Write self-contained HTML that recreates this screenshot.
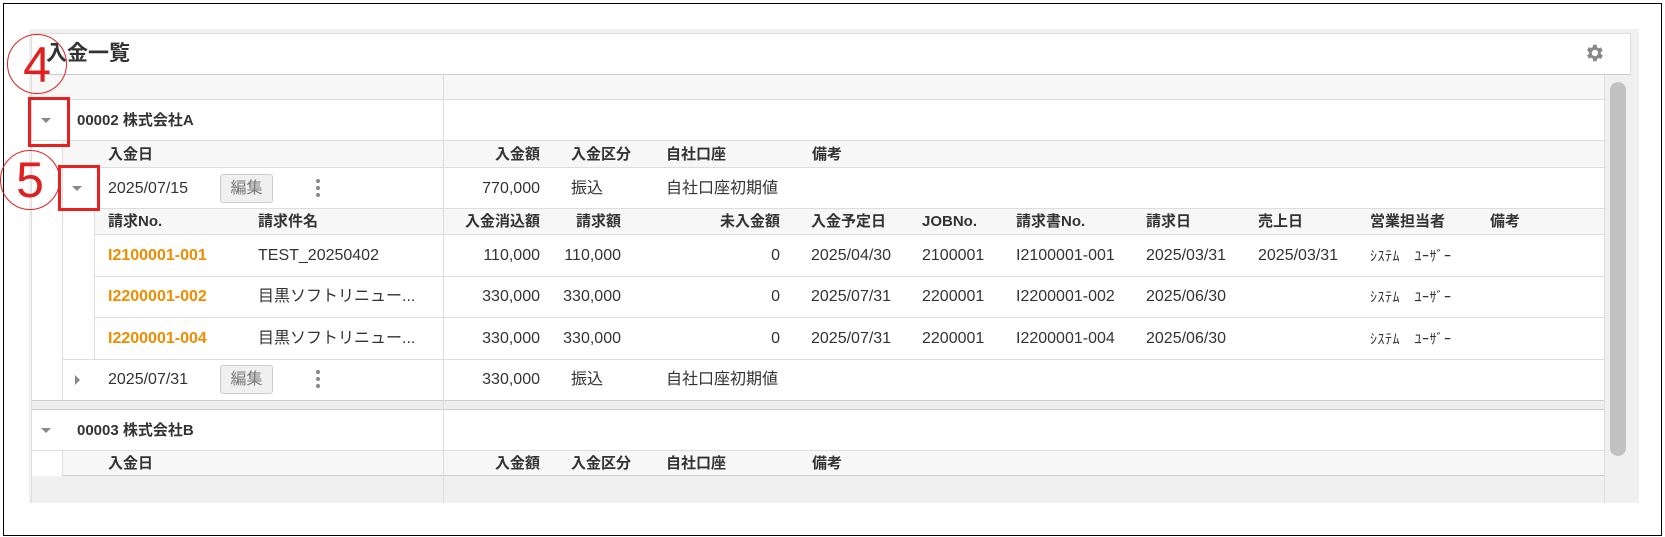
<!DOCTYPE html>
<html><head><meta charset="utf-8"><style>
*{margin:0;padding:0;box-sizing:border-box}
body{width:1665px;height:537px;background:#fff;position:relative;overflow:hidden;font-family:"Liberation Sans","Noto Sans CJK JP",sans-serif;font-size:16px;color:#333}
.a{position:absolute;white-space:nowrap}
.t{position:absolute;white-space:nowrap;line-height:20px}
.b{font-weight:bold;font-size:15px}
.o{color:#f08c00;font-weight:bold}
.rt{text-align:right}
.k{font-size:14px;letter-spacing:0.5px}
</style></head><body>
<div class="a" style="left:3px;top:3px;width:1659px;height:533px;border:1px solid #000"></div>
<div class="a" style="left:29px;top:29px;width:1610px;height:474px;background:#f0f0f0"></div>
<div class="a" style="left:31px;top:33px;width:1600px;height:470px;background:#fff;border:1px solid #ddd;border-bottom:none"></div>
<div class="t" style="left:46px;top:40px;font-size:21px;line-height:28px;font-weight:bold">入金一覧</div>
<svg class="a" style="left:1583px;top:42px" width="22" height="22" viewBox="0 0 24 24"><path fill="#888" d="M19.4 13a7.5 7.5 0 0 0 0-2l2.1-1.6-2-3.5-2.5 1a7.6 7.6 0 0 0-1.7-1L15 3h-4l-.4 2.6a7.6 7.6 0 0 0-1.7 1l-2.5-1-2 3.5L6.6 11a7.5 7.5 0 0 0 0 2l-2.1 1.6 2 3.5 2.5-1a7.6 7.6 0 0 0 1.7 1L11 21h4l.4-2.6a7.6 7.6 0 0 0 1.7-1l2.5 1 2-3.5zM13 15.5a3.5 3.5 0 1 1 0-7 3.5 3.5 0 0 1 0 7z"/></svg>
<div class="a" style="left:32px;top:74px;width:1572px;height:26px;background:#f7f7f7;border-top:1px solid #ccc;border-bottom:1px solid #ddd"></div>
<div class="a" style="left:32px;top:140px;width:1572px;height:1px;background:#ddd"></div>
<div class="a" style="left:62px;top:141px;width:1542px;height:27px;background:#f7f7f7;border-bottom:1px solid #ddd;border-left:1px solid #ddd"></div>
<div class="a" style="left:62px;top:168px;width:1px;height:233px;background:#ddd"></div>
<div class="a" style="left:62px;top:208px;width:1542px;height:1px;background:#ddd"></div>
<div class="a" style="left:94px;top:209px;width:1510px;height:26px;background:#f7f7f7;border-bottom:1px solid #ddd;border-left:1px solid #ddd"></div>
<div class="a" style="left:94px;top:235px;width:1px;height:125px;background:#ddd"></div>
<div class="a" style="left:94px;top:276px;width:1510px;height:1px;background:#ddd"></div>
<div class="a" style="left:94px;top:317px;width:1510px;height:1px;background:#ddd"></div>
<div class="a" style="left:62px;top:359px;width:1542px;height:1px;background:#ddd"></div>
<div class="a" style="left:32px;top:400px;width:1572px;height:10px;background:#eee;border-top:1px solid #ccc;border-bottom:1px solid #ccc"></div>
<div class="a" style="left:32px;top:450px;width:1572px;height:1px;background:#ddd"></div>
<div class="a" style="left:62px;top:451px;width:1542px;height:25px;background:#f7f7f7;border-left:1px solid #ddd;border-bottom:1px solid #ccc"></div>
<div class="a" style="left:32px;top:476px;width:1572px;height:27px;background:#f0f0f0"></div>
<div class="a" style="left:443px;top:74px;width:1px;height:429px;background:#ddd"></div>
<div class="a" style="left:1604px;top:74px;width:27px;height:429px;background:#f0f0f0;border-left:1px solid #ddd;border-top:1px solid #ccc"></div>
<div class="a" style="left:1610px;top:82px;width:16px;height:374px;background:#c1c1c1;border-radius:8px"></div>
<div class="a" style="left:41px;top:118px;border:5px solid transparent;border-top:5px solid #888;border-bottom:none"></div>
<div class="a" style="left:72px;top:186px;border:5px solid transparent;border-top:5px solid #888;border-bottom:none"></div>
<div class="a" style="left:75px;top:375px;border:5px solid transparent;border-left:5px solid #888;border-right:none"></div>
<div class="a" style="left:41px;top:428px;border:5px solid transparent;border-top:5px solid #888;border-bottom:none"></div>
<div class="t b" style="left:77px;top:111px">00002 株式会社A</div>
<div class="t b" style="left:108px;top:145px">入金日</div>
<div class="t b rt" style="left:440px;width:100px;top:145px">入金額</div>
<div class="t b" style="left:571px;top:145px">入金区分</div>
<div class="t b" style="left:666px;top:145px">自社口座</div>
<div class="t b" style="left:812px;top:145px">備考</div>
<div class="t" style="left:108px;top:179px">2025/07/15</div>
<div class="a" style="left:220px;top:174px;width:53px;height:29px;background:#f0f0f0;border:1px solid #ccc;border-radius:3px;color:#777;text-align:center;line-height:27px">編集</div>
<div class="a" style="left:316px;top:179px;width:4px;height:4px;border-radius:2px;background:#888;box-shadow:0 7px #888,0 14px #888"></div>
<div class="t rt" style="left:440px;width:100px;top:179px">770,000</div>
<div class="t" style="left:571px;top:179px">振込</div>
<div class="t" style="left:666px;top:179px">自社口座初期値</div>
<div class="t b" style="left:108px;top:212px">請求No.</div>
<div class="t b" style="left:258px;top:212px">請求件名</div>
<div class="t b rt" style="left:440px;width:100px;top:212px">入金消込額</div>
<div class="t b rt" style="left:521px;width:100px;top:212px">請求額</div>
<div class="t b rt" style="left:680px;width:100px;top:212px">未入金額</div>
<div class="t b" style="left:811px;top:212px">入金予定日</div>
<div class="t b" style="left:922px;top:212px">JOBNo.</div>
<div class="t b" style="left:1016px;top:212px">請求書No.</div>
<div class="t b" style="left:1146px;top:212px">請求日</div>
<div class="t b" style="left:1258px;top:212px">売上日</div>
<div class="t b" style="left:1370px;top:212px">営業担当者</div>
<div class="t b" style="left:1490px;top:212px">備考</div>

<div class="t o" style="left:108px;top:246px">I2100001-001</div>
<div class="t" style="left:258px;top:246px">TEST_20250402</div>
<div class="t rt" style="left:440px;width:100px;top:246px">110,000</div>
<div class="t rt" style="left:521px;width:100px;top:246px">110,000</div>
<div class="t rt" style="left:680px;width:100px;top:246px">0</div>
<div class="t" style="left:811px;top:246px">2025/04/30</div>
<div class="t" style="left:922px;top:246px">2100001</div>
<div class="t" style="left:1016px;top:246px">I2100001-001</div>
<div class="t" style="left:1146px;top:246px">2025/03/31</div>
<div class="t" style="left:1258px;top:246px">2025/03/31</div>
<div class="t k" style="left:1370px;top:246px">ｼｽﾃﾑ　ﾕｰｻﾞｰ</div>

<div class="t o" style="left:108px;top:287px">I2200001-002</div>
<div class="t" style="left:258px;top:287px">目黒ソフトリニュー...</div>
<div class="t rt" style="left:440px;width:100px;top:287px">330,000</div>
<div class="t rt" style="left:521px;width:100px;top:287px">330,000</div>
<div class="t rt" style="left:680px;width:100px;top:287px">0</div>
<div class="t" style="left:811px;top:287px">2025/07/31</div>
<div class="t" style="left:922px;top:287px">2200001</div>
<div class="t" style="left:1016px;top:287px">I2200001-002</div>
<div class="t" style="left:1146px;top:287px">2025/06/30</div>
<div class="t k" style="left:1370px;top:287px">ｼｽﾃﾑ　ﾕｰｻﾞｰ</div>

<div class="t o" style="left:108px;top:329px">I2200001-004</div>
<div class="t" style="left:258px;top:329px">目黒ソフトリニュー...</div>
<div class="t rt" style="left:440px;width:100px;top:329px">330,000</div>
<div class="t rt" style="left:521px;width:100px;top:329px">330,000</div>
<div class="t rt" style="left:680px;width:100px;top:329px">0</div>
<div class="t" style="left:811px;top:329px">2025/07/31</div>
<div class="t" style="left:922px;top:329px">2200001</div>
<div class="t" style="left:1016px;top:329px">I2200001-004</div>
<div class="t" style="left:1146px;top:329px">2025/06/30</div>
<div class="t k" style="left:1370px;top:329px">ｼｽﾃﾑ　ﾕｰｻﾞｰ</div>

<div class="t" style="left:108px;top:370px">2025/07/31</div>
<div class="a" style="left:220px;top:365px;width:53px;height:29px;background:#f0f0f0;border:1px solid #ccc;border-radius:3px;color:#777;text-align:center;line-height:27px">編集</div>
<div class="a" style="left:316px;top:370px;width:4px;height:4px;border-radius:2px;background:#888;box-shadow:0 7px #888,0 14px #888"></div>
<div class="t rt" style="left:440px;width:100px;top:370px">330,000</div>
<div class="t" style="left:571px;top:370px">振込</div>
<div class="t" style="left:666px;top:370px">自社口座初期値</div>

<div class="t b" style="left:77px;top:421px">00003 株式会社B</div>
<div class="t b" style="left:108px;top:454px">入金日</div>
<div class="t b rt" style="left:440px;width:100px;top:454px">入金額</div>
<div class="t b" style="left:571px;top:454px">入金区分</div>
<div class="t b" style="left:666px;top:454px">自社口座</div>
<div class="t b" style="left:812px;top:454px">備考</div>
<div class="a" style="left:7px;top:34px;width:60px;height:60px;border:1.5px solid #e02020;border-radius:50%;color:#e02020;font-size:50px;line-height:60px;text-align:center;font-family:'Liberation Sans',sans-serif">4</div>
<div class="a" style="left:0px;top:150px;width:60px;height:60px;border:1.5px solid #e02020;border-radius:50%;color:#e02020;font-size:50px;line-height:58px;text-align:center;font-family:'Liberation Sans',sans-serif">5</div>
<div class="a" style="left:28px;top:97px;width:42px;height:50px;border:3px solid #e82020"></div>
<div class="a" style="left:58px;top:165px;width:42px;height:46px;border:3px solid #e82020"></div>
</body></html>
